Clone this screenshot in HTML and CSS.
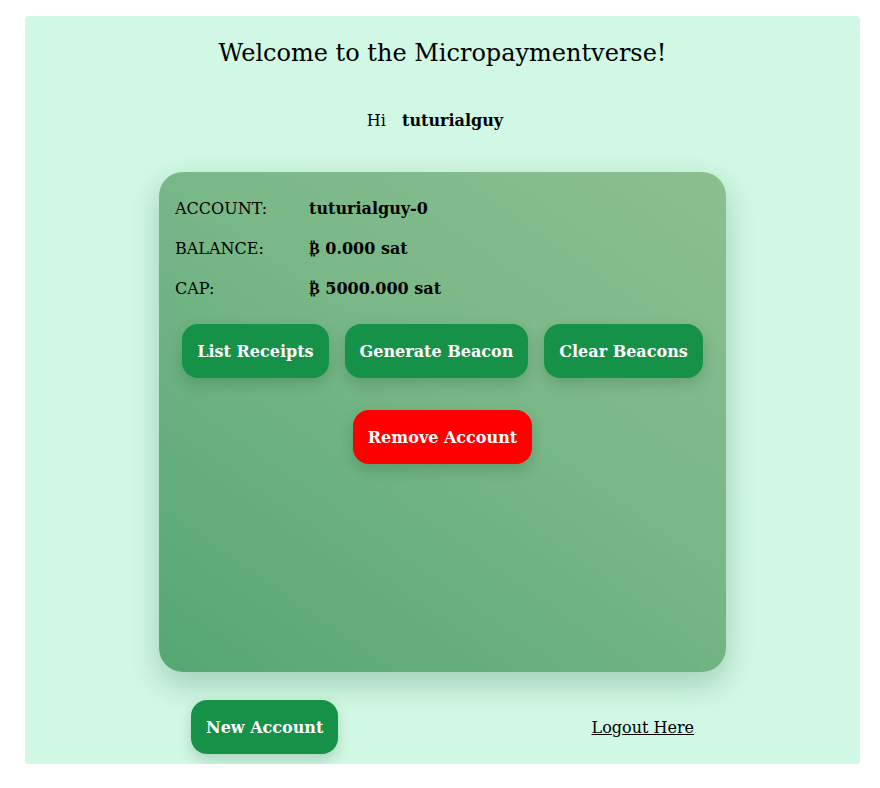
FILE: index.html
```html
<!DOCTYPE html>
<html>
<head>
<meta charset="utf-8">
<link rel="stylesheet" href="styles.css">
</head>
<body>
<div class="page">
  <h2 class="title">Welcome to the Micropaymentverse!</h2>
  <p class="greeting">Hi <b class="user">tuturialguy</b></p>
  <div class="card">
    <div class="info">
      <div class="row"><span class="label">ACCOUNT:</span><b class="value">tuturialguy-0</b></div>
      <div class="row"><span class="label">BALANCE:</span><b class="value">₿ 0.000 sat</b></div>
      <div class="row"><span class="label">CAP:</span><b class="value">₿ 5000.000 sat</b></div>
    </div>
    <div class="actions">
      <button class="btn">List Receipts</button>
      <button class="btn">Generate Beacon</button>
      <button class="btn">Clear Beacons</button>
    </div>
    <div class="actions danger-row">
      <button class="btn btn-danger">Remove Account</button>
    </div>
  </div>
  <div class="footer">
    <button class="btn">New Account</button>
    <a class="logout" href="#">Logout Here</a>
  </div>
</div>
</body>
</html>
```
FILE: styles.css
```css
html, body {
  margin: 0;
  padding: 0;
  background: #ffffff;
  font-family: "DejaVu Serif", serif;
  color: #000;
}
.page {
  margin: 16px 0 0 25px;
  width: 835px;
  height: 748px;
  box-sizing: border-box;
  background: #d0f8e4;
  border-radius: 4px;
  display: flex;
  flex-direction: column;
  align-items: center;
}
.title {
  margin: 0;
  padding-top: 23px;
  font-size: 24px;
  font-weight: normal;
  line-height: 28px;
}
.greeting {
  margin: 44px 0 0;
  padding-right: 15px;
  font-size: 16px;
  line-height: 20px;
}
.user {
  margin-left: 11px;
}
.card {
  margin-top: 41px;
  width: 567px;
  height: 500px;
  box-sizing: border-box;
  border-radius: 24px;
  background: linear-gradient(35deg, #55a772 0%, #78b787 55%, #8cbf8f 100%);
  box-shadow: 0 12px 30px rgba(0, 60, 30, 0.22);
  padding: 27px 16px 0;
}
.info {
  display: flex;
  flex-direction: column;
  gap: 20px;
}
.row {
  display: flex;
  font-size: 16px;
  line-height: 20px;
}
.label {
  width: 134px;
}
.actions {
  display: flex;
  justify-content: center;
  gap: 16px;
  margin-top: 25px;
}
.danger-row {
  margin-top: 32px;
}
.btn {
  font-family: "DejaVu Serif", serif;
  font-weight: bold;
  font-size: 16px;
  color: #ffffff;
  background: #159247;
  border: none;
  border-radius: 16px;
  height: 54px;
  padding: 0 15px;
  box-shadow: 0 6px 14px rgba(0, 50, 20, 0.18);
}
.btn-danger {
  background: #ff0000;
}
.footer {
  margin-top: 28px;
  width: 503px;
  display: flex;
  justify-content: space-between;
  align-items: center;
}
.logout {
  color: #000;
  text-decoration: underline;
  font-size: 16px;
}
```
